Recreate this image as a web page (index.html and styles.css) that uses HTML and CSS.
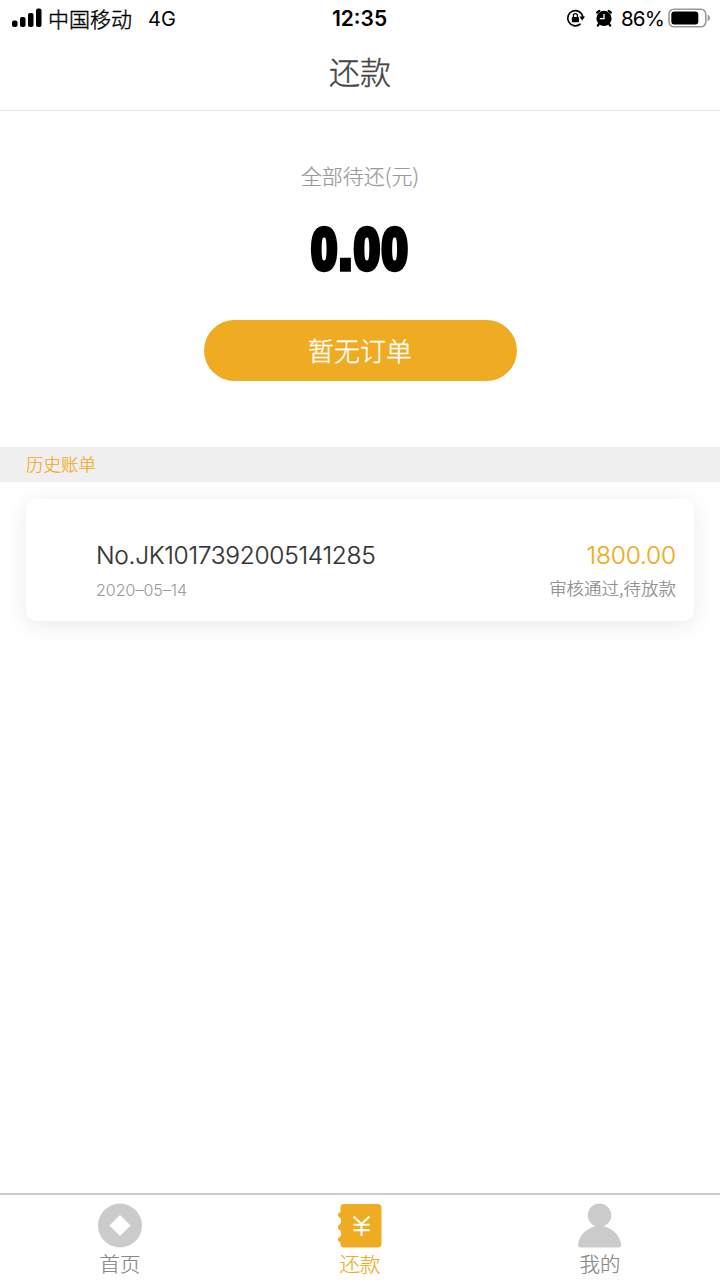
FILE: index.html
```html
<!DOCTYPE html>
<html lang="zh-CN">
<head>
    <meta charset="UTF-8">
    <meta name="viewport" content="width=device-width, initial-scale=1.0">
    <title>还款</title>
    <link rel="stylesheet" href="styles.css">
</head>
<body>
    <div class="page">
        <div class="status-bar">
            <div class="status-left">
                <svg class="signal" width="31" height="20" viewBox="0 0 31 20">
                    <rect x="0" y="12.5" width="5.5" height="6.5" rx="2"/>
                    <rect x="8" y="9" width="5.5" height="10" rx="2"/>
                    <rect x="16" y="5" width="5.5" height="14" rx="2"/>
                    <rect x="24" y="0.5" width="5.5" height="18.5" rx="2"/>
                </svg>
                <span class="carrier">中国移动</span>
                <span class="network">4G</span>
            </div>
            <div class="clock">12:35</div>
            <div class="status-right">
                <svg class="lock" width="20" height="20" viewBox="0 0 20 20">
                    <path d="M14 16.200A7.600 7.600 0 1 1 16.800 8.500" fill="none" stroke="#000" stroke-width="1.7" stroke-linecap="round"/>
                    <path d="M13.400 8.600h5.600l-2.800 4z"/>
                    <rect x="5.800" y="9" width="7.200" height="5.300" rx="0.8"/>
                    <path d="M7.400 9.500V7.600a2 2 0 0 1 4 0v1.900" fill="none" stroke="#000" stroke-width="1.3"/>
                </svg>
                <svg class="alarm" width="18" height="20" viewBox="0 0 18 20">
                    <circle cx="9" cy="10.400" r="7.600"/>
                    <path d="M2 4.600L4.300 2.800M16 4.600L13.700 2.800M4.200 15.500L2.800 17.500M13.800 15.500l1.400 2" stroke="#000" stroke-width="2.200" stroke-linecap="round"/>
                    <path d="M9 6v4.700H4.800" fill="none" stroke="#fff" stroke-width="1.3"/>
                </svg>
                <span class="percent">86%</span>
                <svg class="battery" width="43" height="20" viewBox="0 0 43 20">
                    <rect x="1" y="1.200" width="36.800" height="17.600" rx="5" fill="#fff" stroke="#999" stroke-width="1.600"/>
                    <rect x="3.300" y="3.600" width="27" height="12.800" rx="3"/>
                    <path d="M39.700 6.800c3 1 3 5.400 0 6.400z" fill="#999"/>
                </svg>
            </div>
        </div>
        <div class="header">还款</div>

        <div class="summary">
            <div class="summary-label">全部待还(元)</div>
            <div class="summary-amount">0.00</div>
            <button class="order-button">暂无订单</button>
        </div>

        <div class="section-title">历史账单</div>
        <div class="bill-list">
            <div class="bill">
                <div class="bill-info">
                    <div class="bill-no">No.JK1017392005141285</div>
                    <div class="bill-date">2020–05–14</div>
                </div>
                <div class="bill-result">
                    <div class="bill-amount">1800.00</div>
                    <div class="bill-status">审核通过,待放款</div>
                </div>
            </div>
        </div>

        <div class="tab-bar">
            <div class="tab">
                <svg width="44" height="44" viewBox="0 0 44 44">
                    <circle cx="22" cy="21.500" r="22" fill="#cbcbcb"/>
                    <path d="M22 11.500L32 21.500 22 31.500 12 21.500z" fill="#fff" stroke="#fff" stroke-linejoin="round"/>
                </svg>
                <span>首页</span>
            </div>
            <div class="tab active">
                <svg width="44" height="44" viewBox="0 0 44 44">
                    <path d="M6 0H39.500a4 4 0 0 1 4 4V39.500a4 4 0 0 1-4 4H6a3.500 3.500 0 0 1-3.500-3.500V38.500C-.8 37.500-.8 33.500 2.500 32.500Q4 29.500 2.500 26.500C-.8 25.500-.8 21 2.500 20Q4 17 2.500 14C-.8 13-.8 9 2.500 8V3.500A3.500 3.500 0 0 1 6 0z" fill="#efab21"/>
                    <path d="M15.500 12.500l8 7.500 8-7.500M23.500 20v12M15.500 20.700h16M15.500 26.200h16" fill="none" stroke="#fff" stroke-width="2"/>
                </svg>
                <span>还款</span>
            </div>
            <div class="tab">
                <svg width="44" height="44" viewBox="0 0 44 44">
                    <circle cx="21.500" cy="11.300" r="11.700" fill="#cbcbcb"/>
                    <path d="M15.500 22.800Q21.500 20.500 27.500 22.800C36.500 26 41.500 32 43.200 40.500Q43.500 43.500 40.500 43.500H2.800Q-.2 43.500 0 40.500C1.500 32 6.500 26 15.500 22.800z" fill="#cbcbcb"/>
                </svg>
                <span>我的</span>
            </div>
        </div>
    </div>
</body>
</html>
```
FILE: styles.css
```css
* {
    margin: 0;
    padding: 0;
    box-sizing: border-box;
}
body {
    font-family: Inter, "Noto Sans CJK SC", sans-serif;
    font-weight: 300;
    background-color: #fff;
}
.page {
    height: 1280px;
    display: flex;
    flex-direction: column;
    overflow: hidden;
}
.status-bar {
    height: 36px;
    display: grid;
    grid-template-columns: 1fr auto 1fr;
    align-items: center;
    padding: 0 9px 0 12px;
    font-size: 21px;
    line-height: 34px;
    color: #000;
}
.status-left,
.status-right {
    display: flex;
    align-items: center;
}
.status-right {
    justify-content: flex-end;
}
.carrier {
    margin-left: 5px;
    font-family: "Noto Sans CJK SC", sans-serif;
    line-height: 32px;
    -webkit-text-stroke: 0.4px #000;
}
.network {
    margin-left: 16px;
    padding-top: 2px;
    font-size: 20px;
    font-weight: 400;
}
.clock {
    margin-right: 4px;
    padding-top: 1px;
    font-size: 21px;
    font-weight: 600;
}
.alarm {
    margin-left: 9px;
}
.percent {
    margin: 0 4px 0 8px;
    padding-top: 1px;
    font-size: 20.5px;
    font-weight: 400;
    letter-spacing: -0.8px;
}
.header {
    height: 75px;
    border-bottom: 1px solid #e6e6e6;
    font-size: 31px;
    line-height: 74px;
    text-align: center;
    color: #444;
    -webkit-text-stroke: 0.4px #444;
}
.summary {
    height: 336px;
    padding-top: 48px;
    display: flex;
    flex-direction: column;
    align-items: center;
}
.summary-label {
    font-family: "Noto Sans CJK SC", sans-serif;
    font-size: 21px;
    line-height: 32px;
    color: #999;
    -webkit-text-stroke: 0.2px #999;
}
.summary-amount {
    margin-top: 22px;
    height: 70px;
    padding-left: 1px;
    font-family: "Liberation Sans", Arial, sans-serif;
    font-size: 58px;
    font-weight: 700;
    line-height: 72px;
    letter-spacing: 2.5px;
    color: #000;
    -webkit-text-stroke: 5.5px #000;
    transform: scaleX(0.8);
}
.order-button {
    width: 313px;
    height: 61px;
    margin-top: 37px;
    padding-bottom: 2px;
    border: none;
    border-radius: 31px;
    background-color: #efab21;
    font-family: "Noto Sans CJK SC", sans-serif;
    font-size: 26px;
    font-weight: 300;
    color: #fff;
    -webkit-text-stroke: 0.3px #fff;
}
.section-title {
    height: 35px;
    padding-left: 26px;
    background-color: #efefef;
    font-size: 17.5px;
    line-height: 35px;
    color: #efab21;
    -webkit-text-stroke: 0.2px #efab21;
}
.bill-list {
    flex: 1;
    padding: 17px 26px;
}
.bill {
    height: 122px;
    padding: 38px 18px 0 70px;
    display: flex;
    justify-content: space-between;
    border-radius: 11px;
    background-color: #fff;
    box-shadow: 0 4px 20px rgba(60, 80, 120, 0.12);
}
.bill-no {
    font-size: 24.5px;
    line-height: 37px;
    letter-spacing: -0.3px;
    color: #333;
    -webkit-text-stroke: 0.2px #333;
}
.bill-date {
    font-size: 16px;
    line-height: 33px;
    color: #999;
}
.bill-result {
    text-align: right;
}
.bill-amount {
    font-size: 24.5px;
    line-height: 37px;
    letter-spacing: -0.2px;
    color: #efab21;
    -webkit-text-stroke: 0.2px #efab21;
}
.bill-status {
    font-family: "Noto Sans CJK SC", sans-serif;
    font-size: 17.5px;
    line-height: 28px;
    color: #888;
    -webkit-text-stroke: 0.2px #888;
}
.tab-bar {
    height: 87px;
    display: flex;
    border-top: 2px solid #ccc;
}
.tab {
    flex: 1;
    padding-top: 9px;
    display: flex;
    flex-direction: column;
    align-items: center;
    font-size: 20.5px;
    line-height: 33px;
    color: #888;
    -webkit-text-stroke: 0.2px #888;
}
.tab svg {
    flex: none;
    overflow: visible;
}
.active {
    color: #efab21;
    -webkit-text-stroke-color: #efab21;
}
```
